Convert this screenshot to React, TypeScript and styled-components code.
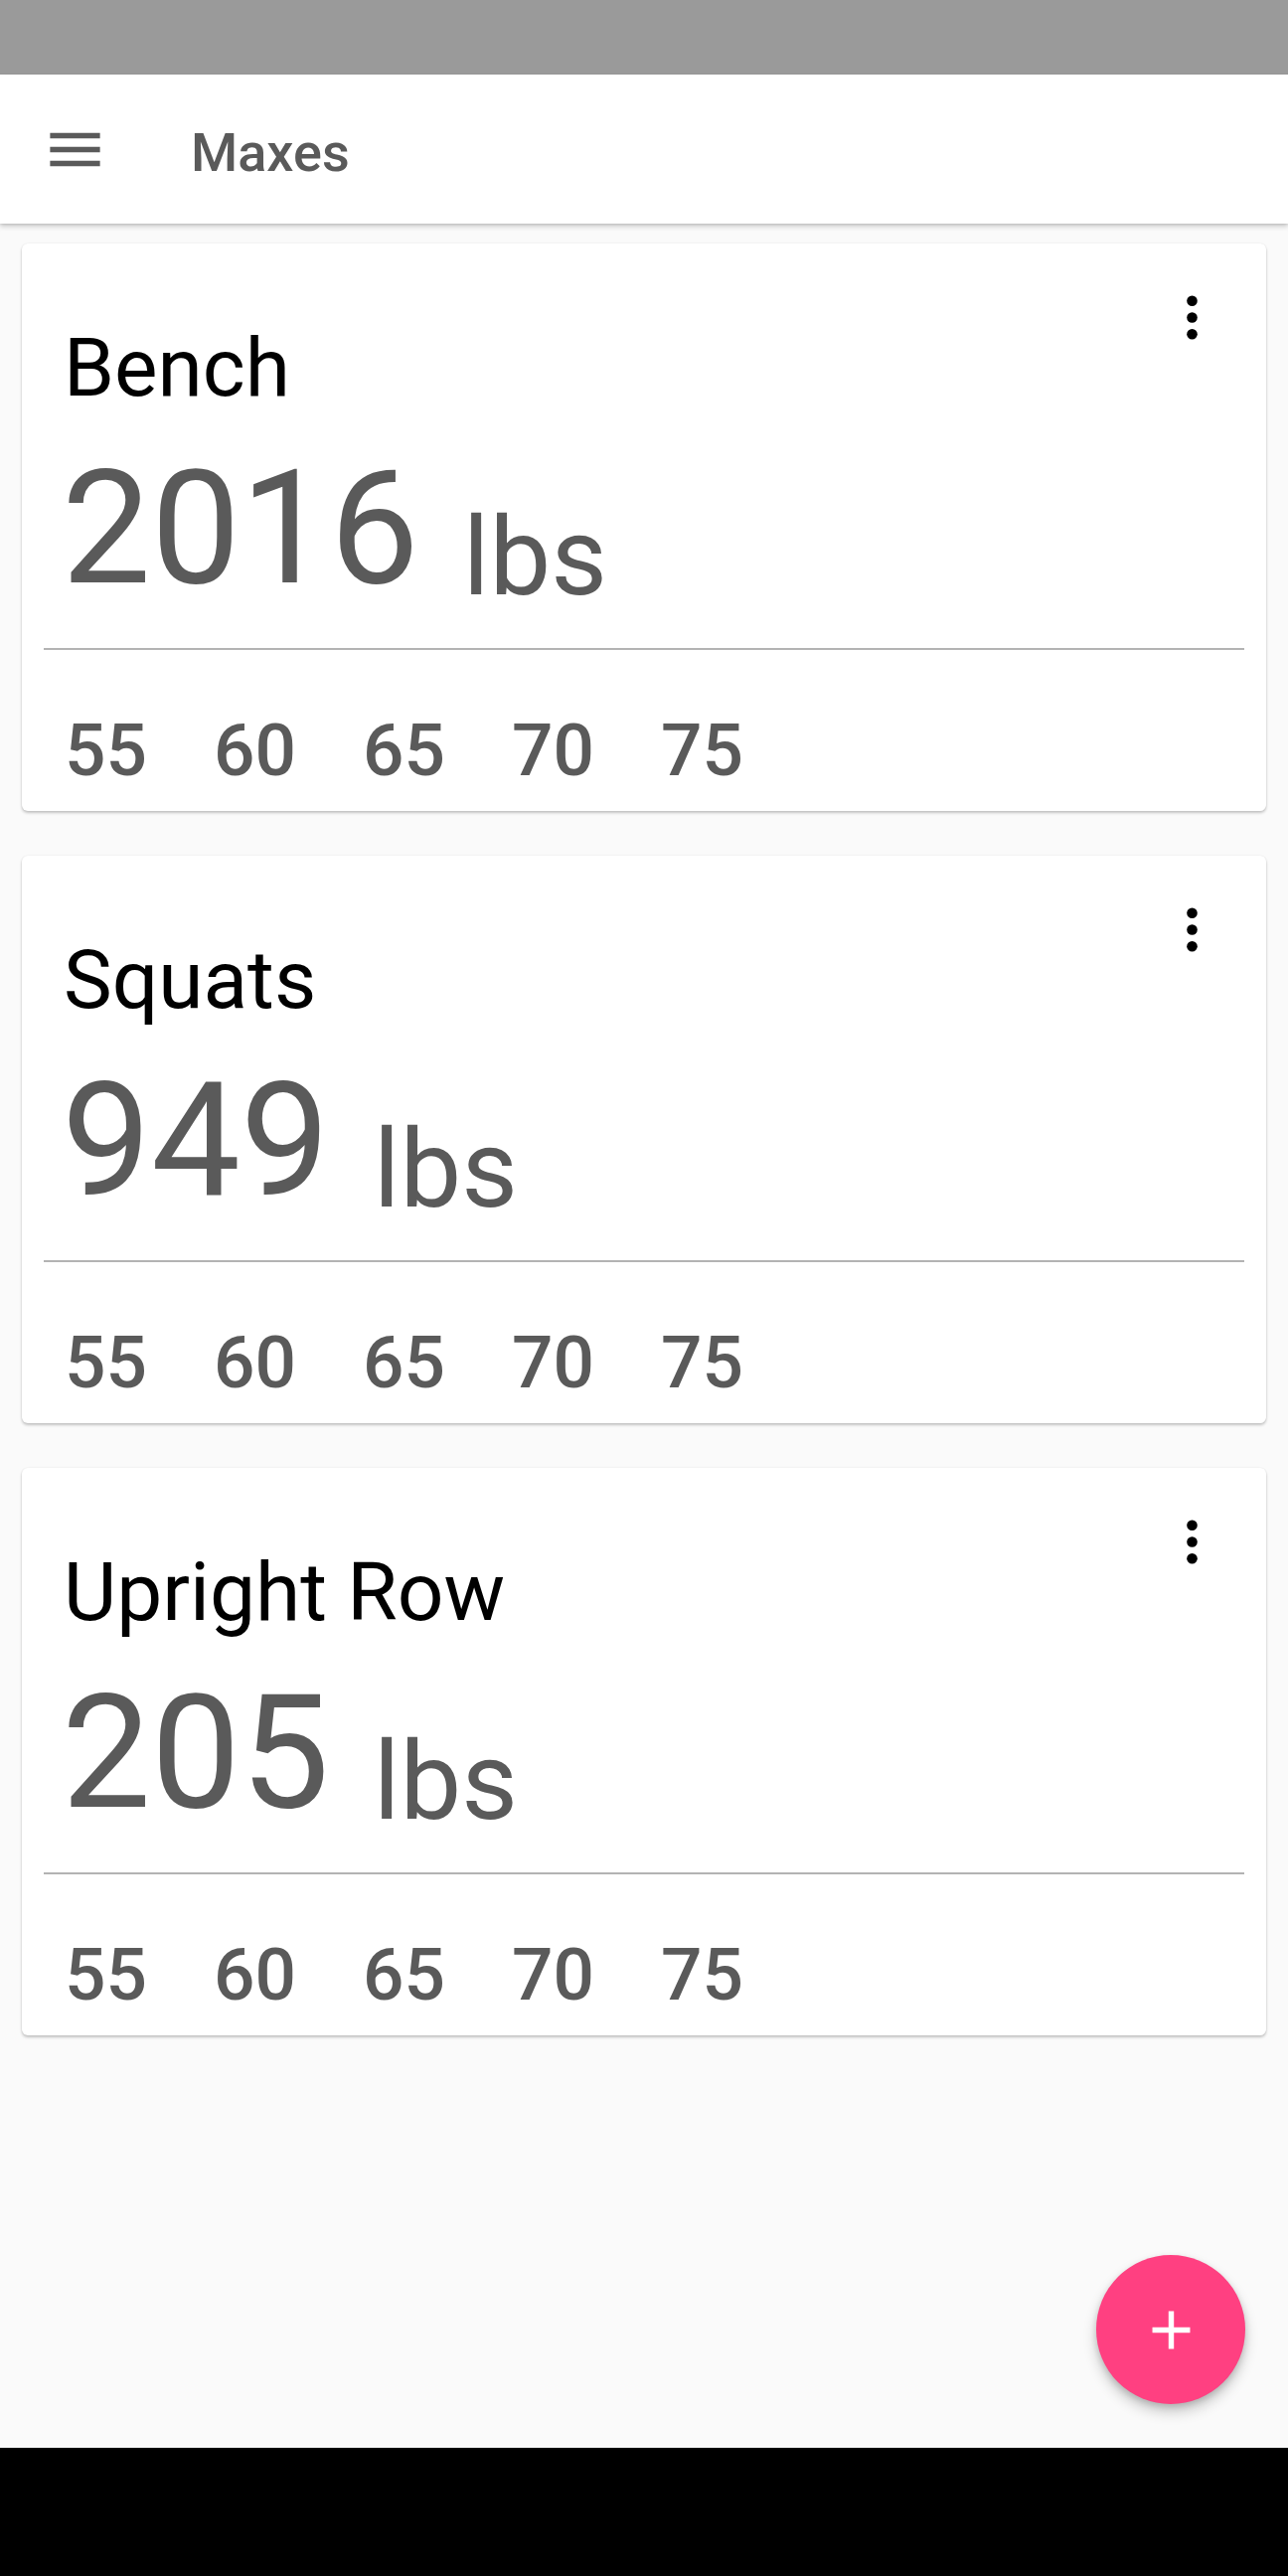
import React from 'react';
import styled, {createGlobalStyle} from 'styled-components';

const GlobalStyle = createGlobalStyle`
  html, body {
    margin: 0;
    padding: 0;
    background: #fafafa;
    font-family: Roboto, "Noto Sans", sans-serif;
  }
`;

const Screen = styled.div`
  display: flex;
  flex-direction: column;
  height: 100vh;
  background: #fafafa;
`;

const StatusBar = styled.div`
  height: 75px;
  flex: 0 0 auto;
  background: #9a9a9a;
`;

const AppBar = styled.header`
  height: 150px;
  flex: 0 0 auto;
  display: flex;
  align-items: center;
  background: #fff;
  box-shadow: 0 3px 5px rgba(0, 0, 0, 0.18), 0 1px 2px rgba(0, 0, 0, 0.1);
  position: relative;
  z-index: 2;
`;

const MenuButton = styled.button`
  border: none;
  background: none;
  padding: 0;
  margin-left: 42px;
  width: 67px;
  height: 67px;
  display: flex;
  color: #5a5a5a;
`;

const AppTitle = styled.h1`
  margin: 0 0 0 83px;
  font-size: 54px;
  font-weight: 500;
  color: #5a5a5a;
  position: relative;
  top: 3px;
`;

const Content = styled.main`
  flex: 1 1 auto;
  position: relative;
  display: flex;
  flex-direction: column;
  gap: 45px;
  padding: 20px 22px;
`;

const Card = styled.section`
  background: #fff;
  border-radius: 6px;
  box-shadow: 0 2px 3px rgba(0, 0, 0, 0.22), 0 0 2px rgba(0, 0, 0, 0.08);
  padding: 0 22px 17px;
  height: 571px;
  box-sizing: border-box;
`;

const CardHeader = styled.div`
  display: flex;
  justify-content: space-between;
  align-items: flex-start;
  padding-top: 77px;
  position: relative;
`;

const LiftName = styled.h2`
  margin: 0 0 0 20px;
  font-size: 82px;
  font-weight: 400;
  line-height: normal;
  color: #000;
`;

const MoreButton = styled.button`
  position: absolute;
  top: 41px;
  right: 19px;
  width: 67px;
  height: 67px;
  padding: 0;
  border: none;
  background: none;
  display: flex;
  color: #000;
`;

const ValueRow = styled.div`
  display: flex;
  align-items: flex-end;
  gap: 44px;
  margin: 20px 0 27px 18px;
`;

const Weight = styled.span`
  font-size: 160px;
  line-height: normal;
  color: #5a5a5a;
`;

const Unit = styled.span`
  font-size: 110px;
  line-height: normal;
  color: #5a5a5a;
`;

const Divider = styled.hr`
  margin: 0;
  border: none;
  height: 2px;
  background: #b3b3b3;
`;

const Percents = styled.div`
  display: flex;
  gap: 67px;
  margin: 58px 0 0 21px;
`;

const Percent = styled.span`
  font-size: 73px;
  font-weight: 500;
  line-height: normal;
  color: #5a5a5a;
`;

const Fab = styled.button`
  position: absolute;
  right: 43px;
  bottom: 44px;
  width: 150px;
  height: 150px;
  border-radius: 50%;
  border: none;
  padding: 0;
  background: #ff4081;
  color: #fff;
  display: flex;
  align-items: center;
  justify-content: center;
  box-shadow: 0 8px 14px rgba(0, 0, 0, 0.2), 0 3px 6px rgba(0, 0, 0, 0.14);
`;

const NavBar = styled.div`
  height: 129px;
  flex: 0 0 auto;
  background: #000;
`;

const MenuIcon = () => (
  <svg viewBox="0 0 24 24" width="67" height="67" fill="currentColor">
    <path d="M3 18h18v-2H3v2zm0-5h18v-2H3v2zm0-7v2h18V6H3z"/>
  </svg>
);

const MoreIcon = () => (
  <svg viewBox="0 0 24 24" width="67" height="67" fill="currentColor">
    <circle cx="12" cy="6" r="1.9"/>
    <circle cx="12" cy="12" r="1.9"/>
    <circle cx="12" cy="18" r="1.9"/>
  </svg>
);

const AddIcon = () => (
  <svg viewBox="0 0 24 24" width="65" height="65" fill="currentColor">
    <path d="M19 13h-6v6h-2v-6H5v-2h6V5h2v6h6v2z"/>
  </svg>
);

const lifts = [
  {name: 'Bench', max: 2016},
  {name: 'Squats', max: 949},
  {name: 'Upright Row', max: 205},
];

const percents = [55, 60, 65, 70, 75];

const App = () => {
  return (
    <>
      <GlobalStyle/>
      <Screen>
        <StatusBar/>
        <AppBar>
          <MenuButton><MenuIcon/></MenuButton>
          <AppTitle>Maxes</AppTitle>
        </AppBar>
        <Content>
          {lifts.map((lift) => (
            <Card key={lift.name}>
              <CardHeader>
                <LiftName>{lift.name}</LiftName>
                <MoreButton><MoreIcon/></MoreButton>
              </CardHeader>
              <ValueRow>
                <Weight>{lift.max}</Weight>
                <Unit>lbs</Unit>
              </ValueRow>
              <Divider/>
              <Percents>
                {percents.map((p) => <Percent key={p}>{p}</Percent>)}
              </Percents>
            </Card>
          ))}
          <Fab><AddIcon/></Fab>
        </Content>
        <NavBar/>
      </Screen>
    </>
  );
};

export default App;
